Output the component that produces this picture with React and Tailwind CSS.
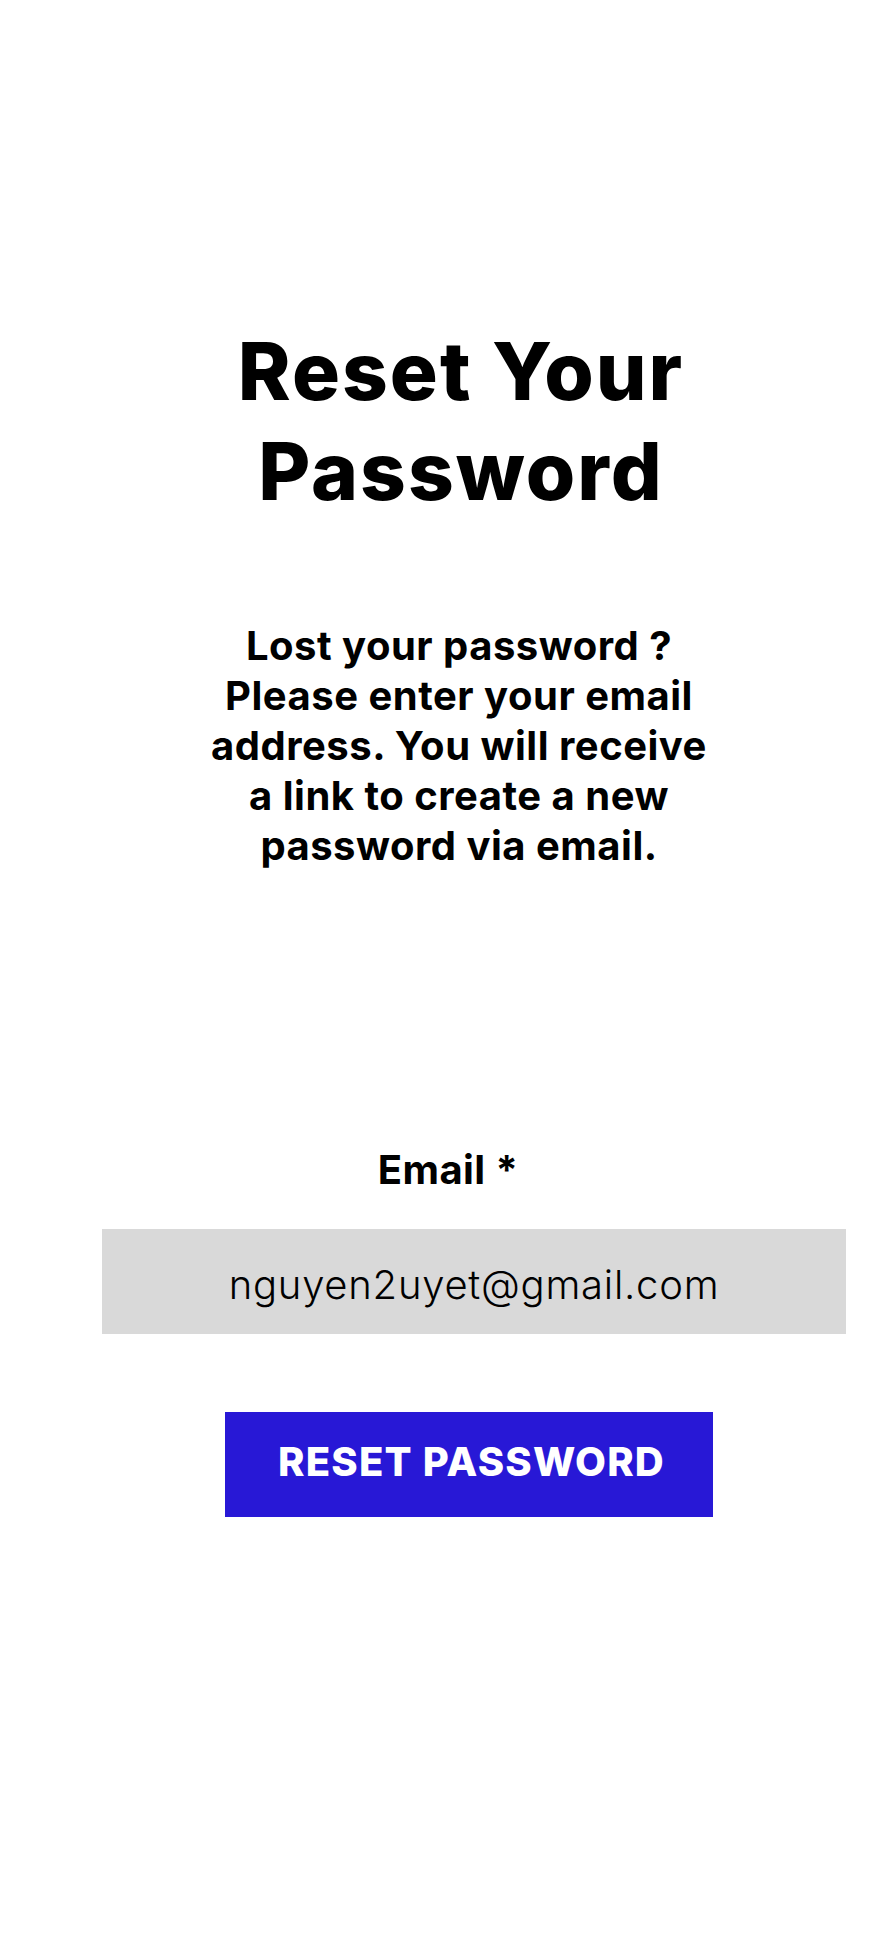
export default function App() {
  return (
    <div
      className="w-[896px] min-h-[1942px] bg-white text-black flex flex-col"
      style={{ fontFamily: "Inter, 'Noto Sans', sans-serif" }}
    >
      <h1 className="mt-[321px] pl-[26px] text-center text-[80px] leading-[100px] font-extrabold tracking-[2px]">
        Reset Your
        <br />
        Password
      </h1>

      <div className="mt-[100px] pl-[22px] flex justify-center">
        <p className="w-[580px] text-center text-[40px] leading-[50px] font-bold tracking-[0.5px]">
          Lost your password ?<br />
          Please enter your email
          <br />
          address. You will receive
          <br />
          a link to create a new
          <br />
          password via email.
        </p>
      </div>

      <label className="mt-[274px] text-center text-[40px] leading-[50px] font-bold tracking-[0.4px]">
        Email *
      </label>

      <div className="mt-[34px] ml-[102px] w-[744px] h-[105px] bg-[#d9d9d9] flex items-center justify-center">
        <span className="pt-[6px] text-[40px] leading-[50px] font-light tracking-[0.75px]">nguyen2uyet@gmail.com</span>
      </div>

      <button className="mt-[78px] ml-[225px] w-[488px] h-[105px] pl-[5px] pb-[5px] bg-[#2818d6] text-white text-[40px] leading-[50px] font-extrabold tracking-[1.2px] flex items-center justify-center">
        RESET PASSWORD
      </button>
    </div>
  );
}
